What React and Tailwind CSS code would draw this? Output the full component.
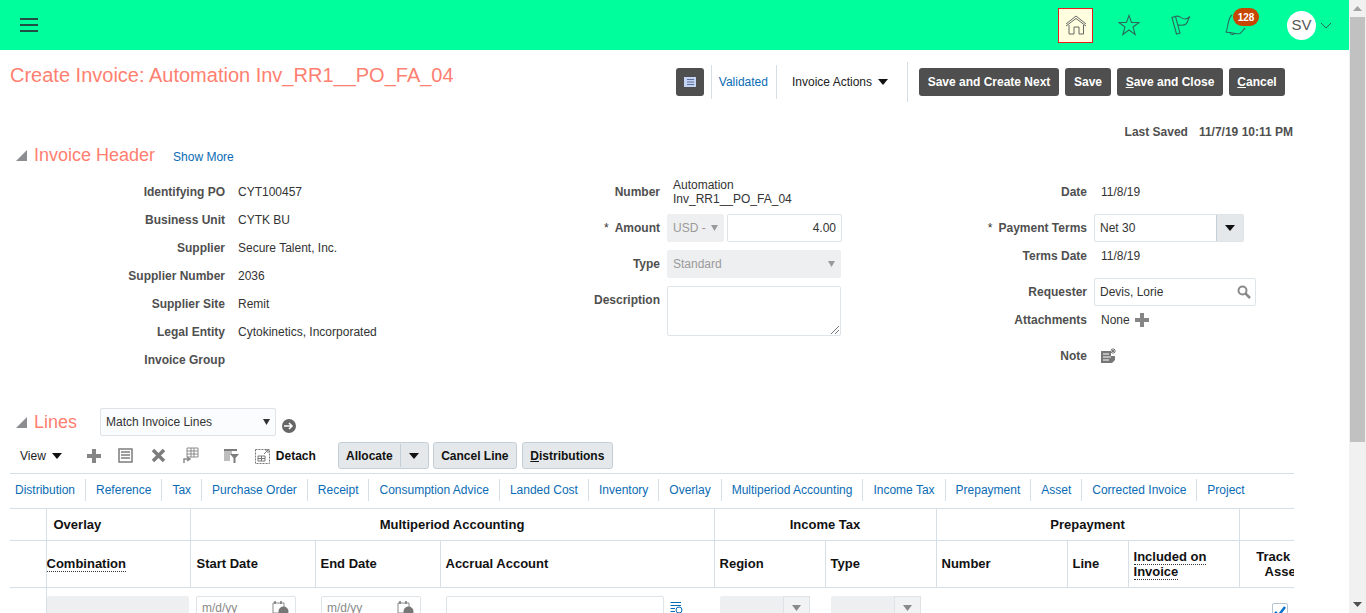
import React from "react";

const Home = () => (
    <svg width="22" height="20" viewBox="0 0 22 20" fill="none" stroke="#666" strokeWidth="1">
        <path d="M1 9 L11 1 L21 9" />
        <path d="M1 11 L11 3.500 L21 11" />
        <path d="M4 10 V19 H9 V12 H14 V19 H18.500 V10" />
    </svg>
);

const Star = () => (
    <svg width="22" height="22" viewBox="0 0 22 22" fill="none" stroke="#2b6b5c" strokeWidth="1.1">
        <path d="M11 1.500 L13.500 8.500 L21 8.500 L15 13 L17.200 20.500 L11 16 L4.800 20.500 L7 13 L1 8.500 L8.500 8.500 Z" />
    </svg>
);

const Flag = () => (
    <svg width="20" height="22" viewBox="0 0 20 22" fill="none" stroke="#2b6b5c" strokeWidth="1.1">
        <path d="M1 3.500 L5.500 20 L9 19 L4.500 2.500 Z" />
        <path d="M4.500 2.500 C8 0.500 10 5 14 5 C16 5 18 3.500 19 2.500 C17 5 17 8 15 10 C13 12 9 11 6.500 11" />
    </svg>
);

const Bell = () => (
    <svg width="22" height="24" viewBox="0 0 22 24" fill="none" stroke="#2b6b5c" strokeWidth="1.1">
        <path d="M7 2 C4 4 4 8 3 11 C2.500 14 2 17 1 19 C4 20 6 19 8 20 C11 21 13 21 15 20.500 C17 19 18 17 20 15" />
        <path d="M5 19.500 C5.500 22 9 22 9.500 20" />
    </svg>
);

const Triangle = () => (
    <svg width="11" height="11" viewBox="0 0 11 11" className="shrink-0"><path d="M11 0 V11 H0 Z" fill="#8b8d91" /></svg>
);

const Caret = ({ color = "#111", w = 10, h = 6 }) => (
    <svg width={w} height={h} viewBox="0 0 10 6" preserveAspectRatio="none" className="shrink-0"><path d="M0 0 H10 L5 6 Z" fill={color} /></svg>
);

const Plus = ({ size = 14 }) => (
    <svg width={size} height={size} viewBox="0 0 14 14" className="shrink-0"><path d="M5 0 H9 V5 H14 V9 H9 V14 H5 V9 H0 V5 H5 Z" fill="#858585" /></svg>
);

const Calendar = () => (
    <svg width="17" height="17" viewBox="0 0 17 17" className="shrink-0">
        <path d="M1 3 H12 V13 H1 Z" fill="#fff" stroke="#8a8a8a" />
        <path d="M3 1 V4 M9 1 V4" stroke="#777" strokeWidth="1.500" />
        <circle cx="11.500" cy="11.500" r="5" fill="#777" />
    </svg>
);

const Label = ({ children, req, className = "" }) => (
    <span className={`text-[12px] font-bold text-[#4f4f4f] text-right ${className}`}>
        {req && <span className="text-[#333] font-normal align-top mr-[6px]">*</span>}
        {children}
    </span>
);

const Row = ({ w, h = "h-[28px]", label, req, children }) => (
    <div className={`flex items-center ${h}`}>
        <div className={`${w} text-right shrink-0`}><Label req={req}>{label}</Label></div>
        <div className="flex items-center">{children}</div>
    </div>
);

const left = [
    ["Identifying PO", "CYT100457"],
    ["Business Unit", "CYTK BU"],
    ["Supplier", "Secure Talent, Inc."],
    ["Supplier Number", "2036"],
    ["Supplier Site", "Remit"],
    ["Legal Entity", "Cytokinetics, Incorporated"],
    ["Invoice Group", ""],
];

const tabs = ["Distribution", "Reference", "Tax", "Purchase Order", "Receipt", "Consumption Advice", "Landed Cost", "Inventory", "Overlay", "Multiperiod Accounting", "Income Tax", "Prepayment", "Asset", "Corrected Invoice", "Project"];

const th = "border-l border-b border-[#d6dfe6] text-[13px] font-bold text-[#111]";
const dotted = "border-b border-dotted border-[#333]";

const DarkButton = ({ children, className = "" }) => (
    <button className={`h-[28px] rounded-[3px] bg-[#4f4f4f] text-white text-[12px] font-bold ${className}`}>{children}</button>
);

const LightButton = ({ children, className = "" }) => (
    <button className={`h-[27px] rounded-[3px] border border-[#c4ced7] bg-[#e4e8ea] text-[12px] font-bold text-[#111] ${className}`}>{children}</button>
);

const DisabledSelect = () => (
    <div className="w-[90px] h-[24px] rounded-[2px] bg-[#eeeff0] flex justify-end">
        <div className="w-[27px] h-full border border-[#dfe3e6] bg-[#f1f2f3] flex items-center justify-center"><Caret color="#8a8a8a" w={9} h={6} /></div>
    </div>
);

export default function App() {
    return (
        <div className="flex h-[613px] w-[1366px] overflow-hidden bg-white font-['Liberation_Sans',Arial,sans-serif] text-[12px] text-[#333]">
            <div className="w-[1349px] shrink-0">
                {/* top bar */}
                <header className="h-[50px] bg-[#00ff9c] flex items-center pl-[20px]">
                    <div className="w-[18px] flex flex-col gap-[4px] mr-auto">
                        <div className="h-[2px] bg-[#1f4f45]" />
                        <div className="h-[2px] bg-[#1f4f45]" />
                        <div className="h-[2px] bg-[#1f4f45]" />
                    </div>
                    <div className="w-[35px] h-[35px] border border-[#e81c1c] bg-[#ffffe0] flex items-center justify-center"><Home /></div>
                    <div className="ml-[25px]"><Star /></div>
                    <div className="ml-[31px]"><Flag /></div>
                    <div className="ml-[34px] relative">
                        <Bell />
                        <span className="absolute left-[8px] top-[-5px] w-[26px] h-[18px] rounded-full bg-[#c74600] text-white text-[10px] font-bold flex items-center justify-center">128</span>
                    </div>
                    <div className="ml-[40px] w-[29px] h-[29px] rounded-full bg-white text-[#555] text-[15px] flex items-center justify-center">SV</div>
                    <svg width="12" height="7" viewBox="0 0 12 7" fill="none" stroke="#2f6558" className="ml-[4px] mr-[17px]"><path d="M1 1 L6 6 L11 1" /></svg>
                </header>

                {/* title and actions */}
                <div className="flex h-[46px] pl-[10px] pr-[64px]">
                    <h1 className="text-[20px] leading-[23px] pt-[14px] text-[#ff8070]">Create Invoice: Automation Inv_RR1__PO_FA_04</h1>
                    <div className="ml-auto flex items-center pt-[18px]">
                        <button className="w-[28px] h-[28px] rounded-[3px] bg-[#4f4f4f] flex items-center justify-center">
                            <svg width="12" height="10" viewBox="0 0 12 10"><rect width="12" height="10" fill="#c4d4f2" /><path d="M3 2.500 H10 M3 5 H10 M3 7.500 H10" stroke="#5a6f9c" /></svg>
                        </button>
                        <div className="ml-[7px] h-[34px] border-l border-[#d6dfe6] flex items-center pl-[7px] pr-[8px] text-[#0a6bb5]">Validated</div>
                        <div className="h-[34px] border-l border-[#d6dfe6] flex items-center pl-[15px] pr-[19px] text-[#222] gap-[6px]">Invoice Actions <Caret /></div>
                        <div className="h-[40px] border-l border-[#d6dfe6] mr-[11px]" />
                        <DarkButton className="w-[140px]">Save and Create Next</DarkButton>
                        <DarkButton className="ml-[6px] w-[46px]">Save</DarkButton>
                        <DarkButton className="ml-[6px] w-[106px]"><u>S</u>ave and Close</DarkButton>
                        <DarkButton className="ml-[6px] w-[56px]"><u>C</u>ancel</DarkButton>
                    </div>
                </div>

                <div className="h-[47px] flex justify-end items-end pr-[56px] pb-[2px] gap-[11px] text-[12px] font-bold text-[#4f4f4f]">
                    <span>Last Saved</span><span>11/7/19 10:11 PM</span>
                </div>

                <div className="h-[24px] flex items-center pl-[16px]">
                    <Triangle />
                    <span className="ml-[7px] text-[18px] text-[#ff8070]">Invoice Header</span>
                    <span className="ml-[18px] mt-[3px] text-[#0a6bb5]">Show More</span>
                </div>

                {/* header form */}
                <div className="flex h-[238px] pt-[11px]">
                    <div className="w-[560px]">
                        {left.map(([label, value]) => (
                            <div key={label} className="flex items-center h-[28px]">
                                <div className="w-[225px] shrink-0 text-right"><Label>{label}</Label></div>
                                <span className="ml-[13px]">{value}</span>
                            </div>
                        ))}
                    </div>
                    <div className="w-[334px]">
                        <Row w="w-[100px]" label="Number">
                            <div className="ml-[13px] leading-[14px]">Automation<br />Inv_RR1__PO_FA_04</div>
                        </Row>
                        <div className="h-[8px]" />
                        <Row w="w-[100px]" label="Amount" req>
                            <div className="ml-[7px] w-[57px] h-[28px] rounded-[2px] bg-[#eeeff0] text-[#9a9a9a] flex items-center justify-between pl-[6px] pr-[6px]">USD - <Caret color="#9a9a9a" w={7} h={6} /></div>
                            <div className="ml-[3px] w-[115px] h-[28px] rounded-[2px] border border-[#dfe4e8] flex items-center justify-end pr-[5px]">4.00</div>
                        </Row>
                        <div className="h-[8px]" />
                        <Row w="w-[100px]" label="Type">
                            <div className="ml-[7px] w-[174px] h-[28px] rounded-[2px] bg-[#eeeff0] text-[#9a9a9a] flex items-center justify-between pl-[6px] pr-[6px]">Standard <Caret color="#9a9a9a" w={7} h={6} /></div>
                        </Row>
                        <div className="h-[8px]" />
                        <div className="flex">
                            <div className="w-[100px] text-right pt-[5px]"><Label>Description</Label></div>
                            <div className="ml-[7px] w-[174px] h-[50px] rounded-[2px] border border-[#dfe4e8] relative">
                                <svg width="9" height="9" viewBox="0 0 9 9" className="absolute right-[1px] bottom-[1px]" stroke="#777" fill="none"><path d="M1 9 L9 1 M5 9 L9 5" /></svg>
                            </div>
                        </div>
                    </div>
                    <div className="flex-1">
                        <Row w="w-[193px]" label="Date"><span className="ml-[14px]">11/8/19</span></Row>
                        <div className="h-[8px]" />
                        <Row w="w-[193px]" label="Payment Terms" req>
                            <div className="ml-[7px] w-[150px] h-[28px] rounded-[2px] border border-[#dfe4e8] flex items-center pl-[5px]">
                                Net 30
                                <div className="ml-auto w-[27px] h-full bg-[#e4e8ea] border-l border-[#c4ced7] flex items-center justify-center"><Caret /></div>
                            </div>
                        </Row>
                        <Row w="w-[193px]" label="Terms Date"><span className="ml-[14px]">11/8/19</span></Row>
                        <div className="h-[8px]" />
                        <Row w="w-[193px]" label="Requester">
                            <div className="ml-[7px] w-[162px] h-[28px] rounded-[2px] border border-[#dfe4e8] flex items-center justify-between pl-[5px] pr-[4px]">
                                Devis, Lorie
                                <svg width="14" height="14" viewBox="0 0 14 14" fill="none" stroke="#8a8a8a" strokeWidth="2"><circle cx="5.500" cy="5.500" r="4" /><path d="M8.500 8.500 L13 13" strokeWidth="2.500" /></svg>
                            </div>
                        </Row>
                        <Row w="w-[193px]" label="Attachments">
                            <span className="ml-[14px]">None</span>
                            <span className="ml-[5px]"><Plus /></span>
                        </Row>
                        <div className="h-[8px]" />
                        <Row w="w-[193px]" label="Note">
                            <svg width="16" height="16" viewBox="0 0 16 16" className="ml-[14px]">
                                <path d="M0 3 H10 V8 H14 V12 L11 15 H0 Z" fill="#777" />
                                <path d="M2 6 H8 M2 9 H10 M2 12 H8" stroke="#fff" />
                                <path d="M12 0 V6 M9.500 3 H15 M10 1 L14 5 M14 1 L10 5" stroke="#777" />
                            </svg>
                        </Row>
                    </div>
                </div>

                {/* lines */}
                <div className="h-[34px] flex items-center pl-[16px]">
                    <Triangle />
                    <span className="ml-[7px] text-[18px] text-[#ff8070]">Lines</span>
                    <div className="ml-[23px] w-[176px] h-[28px] rounded-[2px] border border-[#dfe4e8] bg-[#fbfcfd] flex items-center justify-between pl-[5px] pr-[5px]">Match Invoice Lines <Caret color="#333" w={7} h={6} /></div>
                    <div className="ml-[6px] mt-[8px] w-[14px] h-[14px] rounded-full bg-[#666] flex items-center justify-center">
                        <svg width="10" height="8" viewBox="0 0 10 8" fill="none" stroke="#fff" strokeWidth="1.500"><path d="M0 4 H8 M5 1 L8 4 L5 7" /></svg>
                    </div>
                </div>

                <div className="ml-[10px] w-[1284px] h-[35px] flex items-center pl-[10px] pb-[1px] border-b border-[#d6dfe6]">
                    <span className="text-[#222]">View</span>
                    <span className="ml-[6px]"><Caret /></span>
                    <span className="ml-[25px]"><Plus size={14} /></span>
                    <svg width="15" height="15" viewBox="0 0 15 15" className="ml-[17px]" fill="none" stroke="#7c7c7c"><rect x="1" y="1" width="13" height="13" strokeWidth="1.500" /><path d="M3 4 H12 M3 7 H12 M3 10 H12" strokeWidth="1.500" /></svg>
                    <svg width="15" height="15" viewBox="0 0 15 15" className="ml-[18px]" stroke="#7c7c7c" strokeWidth="3.500"><path d="M2 2 L13 13 M13 2 L2 13" /></svg>
                    <svg width="16" height="17" viewBox="0 0 16 17" className="ml-[17px]" fill="none" stroke="#8a8a8a"><path d="M4 1 H15 V10 H4 Z M4 4 H15 M4 7 H15 M8 1 V10 M11 1 V10" /><path d="M1 16 V12 H6 M4 10 L7 12 L4 14" strokeWidth="1.500" /></svg>
                    <svg width="16" height="16" viewBox="0 0 16 16" className="ml-[24px]"><path d="M1 1 H14 V3 H1 Z" fill="#7c7c7c" /><path d="M1 4 H9 M1 6 H9 M1 8 H7 M1 10 H7 M1 12 H7" stroke="#7c7c7c" /><path d="M7 6 H16 L12.500 10 V15 H10.500 V10 Z" fill="#7c7c7c" /></svg>
                    <svg width="16" height="16" viewBox="0 0 16 16" className="ml-[16px]" fill="none" stroke="#777"><rect x="0.500" y="1.500" width="14" height="14" strokeDasharray="2 1" /><path d="M3 8 H10 V13 H3 Z M3 10.500 H10 M6.500 8 V13" /><path d="M9 6 L13 2 M10 2 H13 V5" /></svg>
                    <span className="ml-[5px] font-bold text-[#111]">Detach</span>
                    <div className="ml-[22px] flex items-center">
                        <div className="flex h-[27px] rounded-[3px] border border-[#c4ced7] bg-[#e4e8ea]">
                            <span className="w-[62px] flex items-center justify-center font-bold text-[#111] border-r border-[#c4ced7] my-[1px]">Allocate</span>
                            <span className="w-[27px] flex items-center justify-center"><Caret /></span>
                        </div>
                        <LightButton className="ml-[4px] w-[84px]">Cancel Line</LightButton>
                        <LightButton className="ml-[5px] w-[91px]"><u>D</u>istributions</LightButton>
                    </div>
                </div>

                <div className="ml-[10px] w-[1284px] h-[34px] flex items-center pl-[5px] pb-[2px] text-[#0a6bb5]">
                    {tabs.map((t, i) => (
                        <span key={t} className={`h-[22px] flex items-center ${i === 0 ? "pr-[10px]" : "px-[10px] border-l border-[#d6dfe6]"}`}>{t}</span>
                    ))}
                </div>

                {/* table */}
                <div className="ml-[10px] w-[1284px] h-[105px] overflow-hidden">
                    <table className="table-fixed border-collapse w-[1319px] border-t border-[#d6dfe6]">
                        <colgroup>
                            <col className="w-[36px]" />
                            <col className="w-[144px]" />
                            <col className="w-[125px]" />
                            <col className="w-[125px]" />
                            <col className="w-[274px]" />
                            <col className="w-[111px]" />
                            <col className="w-[111px]" />
                            <col className="w-[131px]" />
                            <col className="w-[61px]" />
                            <col className="w-[111px]" />
                            <col className="w-[90px]" />
                        </colgroup>
                        <thead>
                            <tr className="h-[32px]">
                                <th className="border-b border-[#d6dfe6]"></th>
                                <th className={`${th} text-left pl-[7px]`}>Overlay</th>
                                <th colSpan={3} className={`${th} text-center`}>Multiperiod Accounting</th>
                                <th colSpan={2} className={`${th} text-center`}>Income Tax</th>
                                <th colSpan={3} className={`${th} text-center`}>Prepayment</th>
                                <th className={th}></th>
                            </tr>
                            <tr className="h-[47px]">
                                <th className="border-b border-[#d6dfe6]"></th>
                                <th className={`${th} text-left`}><span className={dotted}>Combination</span></th>
                                <th className={`${th} text-left pl-[6px]`}>Start Date</th>
                                <th className={`${th} text-left pl-[5px]`}>End Date</th>
                                <th className={`${th} text-left pl-[5px]`}>Accrual Account</th>
                                <th className={`${th} text-left pl-[5px]`}>Region</th>
                                <th className={`${th} text-left pl-[5px]`}>Type</th>
                                <th className={`${th} text-left pl-[5px]`}>Number</th>
                                <th className={`${th} text-left pl-[5px]`}>Line</th>
                                <th className={`${th} text-left pl-[5px] leading-[15px]`}><span className={dotted}>Included on</span><br /><span className={dotted}>Invoice</span></th>
                                <th className={`${th} text-center leading-[15px] pr-[4px]`}>Track as<br />Asset</th>
                            </tr>
                        </thead>
                        <tbody>
                            <tr>
                                <td></td>
                                <td className="border-l border-[#d6dfe6] align-top pt-[8px]"><div className="w-[142px] h-[24px] rounded-[2px] bg-[#eeeff0]" /></td>
                                <td className="align-top pt-[8px] pl-[6px]">
                                    <div className="w-[100px] h-[24px] rounded-[2px] border border-[#dfe4e8] flex items-center justify-between pl-[5px] pr-[6px] text-[#8a8a8a]">m/d/yy <Calendar /></div>
                                </td>
                                <td className="align-top pt-[8px] pl-[6px]">
                                    <div className="w-[100px] h-[24px] rounded-[2px] border border-[#dfe4e8] flex items-center justify-between pl-[5px] pr-[6px] text-[#8a8a8a]">m/d/yy <Calendar /></div>
                                </td>
                                <td className="align-top pt-[8px] pl-[6px]">
                                    <div className="flex items-start">
                                        <div className="w-[218px] h-[24px] rounded-[2px] border border-[#dfe4e8]" />
                                        <svg width="13" height="12" viewBox="0 0 13 12" className="ml-[6px] mt-[6px]" fill="none" stroke="#0a6bb5"><path d="M0.500 0.500 H11 M0.500 3.500 H11 M0.500 6.500 H5 M0.500 9.500 H5" /><circle cx="9" cy="8" r="3" /></svg>
                                    </div>
                                </td>
                                <td className="align-top pt-[8px] pl-[6px]"><DisabledSelect /></td>
                                <td className="align-top pt-[8px] pl-[6px]"><DisabledSelect /></td>
                                <td></td>
                                <td></td>
                                <td></td>
                                <td className="align-top pt-[15px] pl-[33px]">
                                    <div className="w-[16px] h-[16px] rounded-[2px] border border-[#b7c3cd] flex items-center justify-center">
                                        <svg width="12" height="11" viewBox="0 0 12 11" fill="none" stroke="#0572ce" strokeWidth="2.500"><path d="M1 6 L4.500 9.500 L11 1" /></svg>
                                    </div>
                                </td>
                            </tr>
                        </tbody>
                    </table>
                </div>
            </div>

            {/* scrollbar */}
            <div className="w-[17px] shrink-0 bg-[#f1f1f1] flex flex-col items-center">
                <div className="h-[17px] flex items-center justify-center"><svg width="9" height="5" viewBox="0 0 9 5"><path d="M0 5 H9 L4.500 0 Z" fill="#a3a3a3" /></svg></div>
                <div className="w-[15px] h-[425px] bg-[#c1c1c1]" />
                <div className="mt-auto h-[17px] flex items-center justify-center"><svg width="9" height="5" viewBox="0 0 9 5"><path d="M0 0 H9 L4.500 5 Z" fill="#505050" /></svg></div>
            </div>
        </div>
    );
}
